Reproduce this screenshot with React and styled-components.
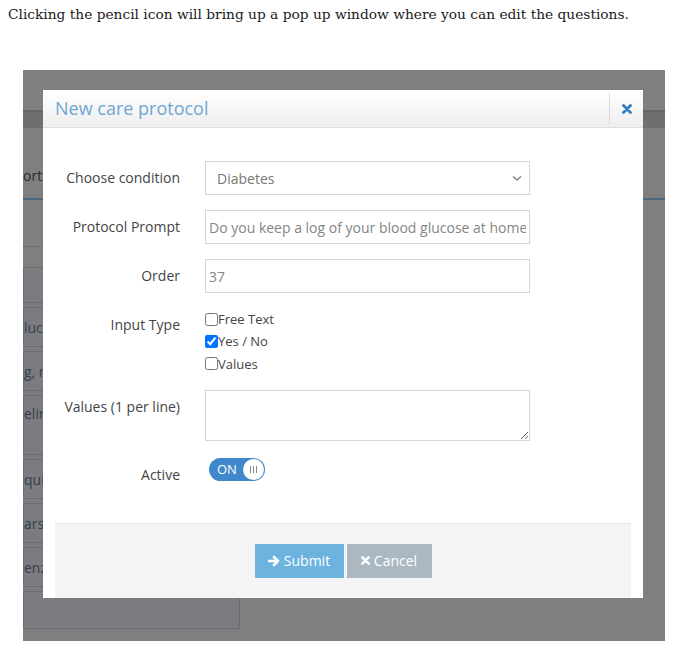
import React from "react";
import styled, { createGlobalStyle } from "styled-components";

const Global = createGlobalStyle`
  html, body { margin: 0; padding: 0; background: #fff; }
  body { margin: 8px; font-family: "DejaVu Serif", Georgia, serif; }
  * { box-sizing: border-box; }
`;

const Intro = styled.p`
  margin: 0;
  font-size: 13.75px;
  line-height: 12px;
  color: #1a1a1a;
  white-space: nowrap;
`;

const Shot = styled.div`
  position: relative;
  margin: 50px 0 0 15px;
  width: 642px;
  height: 571px;
  overflow: hidden;
  background: #fff;
  font-family: "Open Sans", sans-serif;
`;

/* ---------- background app (dimmed) ---------- */
const AppTop = styled.div`
  height: 40px;
  background: #fff;
`;
const AppBand = styled.div`
  height: 18px;
  background: #dedede;
  border-top: 2px solid #c8c8c8;
`;
const AppTabs = styled.div`
  height: 72px;
  display: flex;
  align-items: flex-end;
  padding-bottom: 13px;
  border-bottom: 2px solid #9cd3ff;
`;
const TabText = styled.span`
  font-size: 14px;
  color: #555;
`;
const Dotted = styled.div`
  margin-top: 46px;
  width: 217px;
  border-top: 1px dotted #bbb;
`;
const List = styled.div`
  margin-top: 20px;
  width: 217px;
  display: flex;
  flex-direction: column;
  gap: 4px;
  background: #f4f9ff;
`;
const ListItem = styled.div`
  height: ${(p) => p.$h || 40}px;
  display: flex;
  align-items: ${(p) => (p.$top ? "flex-start" : "center")};
  padding-top: ${(p) => (p.$top ? 8 : 0)}px;
  border: 1px solid #d4dbe4;
  font-size: 14px;
  color: #6f7f95;
  white-space: nowrap;
`;
const Dim = styled.div`
  position: absolute;
  inset: 0;
  background: rgba(0, 0, 0, 0.5);
`;

/* ---------- modal ---------- */
const Modal = styled.div`
  position: absolute;
  left: 20px;
  top: 20px;
  width: 600px;
  background: #fff;
  color: #444;
`;
const Header = styled.div`
  height: 38px;
  display: flex;
  align-items: stretch;
  padding-left: 12px;
  background: linear-gradient(#ffffff, #eeeeee);
  border-bottom: 1px solid #dddddd;
`;
const Title = styled.h4`
  flex: 1;
  margin: 0;
  font-size: 18px;
  font-weight: 400;
  line-height: 37px;
  color: #6fa7d4;
`;
const Close = styled.button`
  width: 34px;
  margin: 3px 0;
  padding: 0;
  border: 0;
  border-left: 1px solid #d9d9d9;
  background: transparent;
  display: flex;
  align-items: center;
  justify-content: center;
`;
const Body = styled.div`
  padding: 33px 12px;
`;
const Form = styled.div`
  display: grid;
  grid-template-columns: 125px 325px;
  column-gap: 25px;
  row-gap: 15px;
`;
const Label = styled.label`
  padding-top: ${(p) => p.$pt ?? 7}px;
  padding-bottom: ${(p) => p.$pb ?? 0}px;
  font-size: 14px;
  line-height: 20px;
  text-align: right;
  color: #444;
`;
const SelectWrap = styled.div`
  position: relative;
  height: 34px;
`;
const Select = styled.select`
  appearance: none;
  width: 100%;
  height: 34px;
  padding: 0 11px;
  border: 1px solid #d5d5d5;
  border-radius: 0;
  background: #fff;
  font-family: "Open Sans", sans-serif;
  font-size: 14px;
  color: #777;
  outline: none;
`;
const Chevron = styled.svg`
  position: absolute;
  right: 8px;
  top: 14px;
  pointer-events: none;
`;
const Input = styled.input`
  width: 100%;
  height: 34px;
  padding: 0 3px;
  border: 1px solid #d5d5d5;
  border-radius: 0;
  font-family: "Open Sans", sans-serif;
  font-size: 14px;
  color: #858585;
  outline: none;
`;
const Checks = styled.div`
  display: flex;
  flex-direction: column;
`;
const CheckRow = styled.label`
  display: flex;
  align-items: center;
  height: 22.3px;
  font-size: 13px;
  color: #444;
  input {
    margin: 0;
    width: 13px;
    height: 13px;
  }
`;
const TextArea = styled.textarea`
  width: 100%;
  height: 51px;
  border: 1px solid #d5d5d5;
  border-radius: 0;
  outline: none;
  font-family: "Open Sans", sans-serif;
`;
const Switch = styled.div`
  margin: 2px 0 0 4px;
  width: 56px;
  height: 23px;
  border-radius: 12px;
  background: #3f88cb;
  display: flex;
  align-items: center;
  justify-content: space-between;
  padding: 0 1px 0 8px;
`;
const SwitchText = styled.span`
  font-size: 13px;
  font-weight: 400;
  color: #fff;
`;
const Knob = styled.span`
  width: 21px;
  height: 21px;
  border-radius: 50%;
  background: #fff;
  display: flex;
  align-items: center;
  justify-content: center;
  gap: 2px;
`;
const Grip = styled.i`
  width: 1px;
  height: 7px;
  background: #888;
`;
const Footer = styled.div`
  margin: 0 12px;
  padding: 20px 0;
  border-top: 1px solid #e5e5e5;
  background: #f4f4f4;
  display: flex;
  justify-content: center;
  gap: 3px;
`;
const Button = styled.button`
  height: 34px;
  width: ${(p) => p.$w}px;
  border: 0;
  border-radius: 0;
  background: ${(p) => p.$bg};
  color: #fff;
  font-family: "Open Sans", sans-serif;
  font-size: 14px;
  display: flex;
  align-items: center;
  justify-content: center;
  gap: 4px;
  padding: 0;
`;

const XIcon = ({ color, size = 10 }) => (
  <svg width={size} height={size} viewBox="0 0 10 10">
    <path d="M1.5 1.5 L8.5 8.5 M8.5 1.5 L1.5 8.5" stroke={color} strokeWidth="2.8" strokeLinecap="round" />
  </svg>
);

const ArrowIcon = () => (
  <svg width="12" height="12" viewBox="0 0 12 12">
    <path d="M1 6 H9 M6 2 L10 6 L6 10" stroke="#fff" strokeWidth="2.6" fill="none" strokeLinecap="round" strokeLinejoin="round" />
  </svg>
);

export default function App() {
  return (
    <>
      <Global />
      <Intro>Clicking the pencil icon will bring up a pop up window where you can edit the questions.</Intro>
      <Shot>
        <AppTop />
        <AppBand />
        <AppTabs>
          <TabText>orts</TabText>
        </AppTabs>
        <Dotted />
        <List>
          <ListItem $h={36} />
          <ListItem>luca</ListItem>
          <ListItem>g, re</ListItem>
          <ListItem $h={60} $top>elin</ListItem>
          <ListItem>qui</ListItem>
          <ListItem>ars?</ListItem>
          <ListItem>enz</ListItem>
          <ListItem $h={38} />
        </List>
        <Dim />
        <Modal>
          <Header>
            <Title>New care protocol</Title>
            <Close aria-label="close">
              <XIcon color="#2f7cc3" />
            </Close>
          </Header>
          <Body>
            <Form>
              <Label>Choose condition</Label>
              <SelectWrap>
                <Select defaultValue="Diabetes">
                  <option>Diabetes</option>
                </Select>
                <Chevron width="10" height="7" viewBox="0 0 10 7">
                  <path d="M1 1.5 L5 5 L9 1.5" stroke="#888" strokeWidth="1.6" fill="none" />
                </Chevron>
              </SelectWrap>

              <Label>Protocol Prompt</Label>
              <Input readOnly defaultValue="Do you keep a log of your blood glucose at home?" />

              <Label>Order</Label>
              <Input readOnly defaultValue="37" />

              <Label>Input Type</Label>
              <Checks>
                <CheckRow><input type="checkbox" />Free Text</CheckRow>
                <CheckRow><input type="checkbox" defaultChecked />Yes / No</CheckRow>
                <CheckRow><input type="checkbox" />Values</CheckRow>
              </Checks>

              <Label>Values (1 per line)</Label>
              <TextArea />

              <Label $pt={9} $pb={5}>Active</Label>
              <div>
                <Switch>
                  <SwitchText>ON</SwitchText>
                  <Knob><Grip /><Grip /><Grip /></Knob>
                </Switch>
              </div>
            </Form>
          </Body>
          <Footer>
            <Button $w={89} $bg="#6cb3e0"><ArrowIcon />Submit</Button>
            <Button $w={85} $bg="#abb8c2"><XIcon color="#fff" size={9} />Cancel</Button>
          </Footer>
        </Modal>
      </Shot>
    </>
  );
}
